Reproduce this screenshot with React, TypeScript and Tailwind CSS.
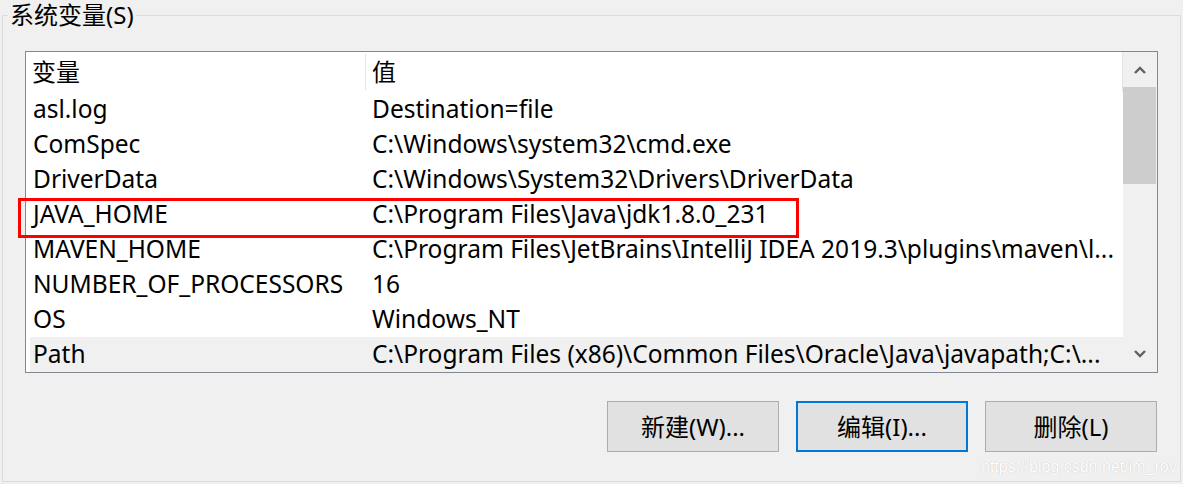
import React from 'react';

const rows = [
  { name: 'asl.log', value: 'Destination=file' },
  { name: 'ComSpec', value: 'C:\\Windows\\system32\\cmd.exe' },
  { name: 'DriverData', value: 'C:\\Windows\\System32\\Drivers\\DriverData' },
  { name: 'JAVA_HOME', value: 'C:\\Program Files\\Java\\jdk1.8.0_231' },
  { name: 'MAVEN_HOME', value: 'C:\\Program Files\\JetBrains\\IntelliJ IDEA 2019.3\\plugins\\maven\\l...' },
  { name: 'NUMBER_OF_PROCESSORS', value: '16' },
  { name: 'OS', value: 'Windows_NT' },
  { name: 'Path', value: 'C:\\Program Files (x86)\\Common Files\\Oracle\\Java\\javapath;C:\\...' },
];

const font = { fontFamily: '"Noto Sans", "Noto Sans CJK SC", sans-serif' };

function Chevron({ up }: { up?: boolean }) {
  return (
    <svg width="12" height="8" viewBox="0 0 12 8">
      <path
        d={up ? 'M1 7 L6 2 L11 7' : 'M1 1 L6 6 L11 1'}
        fill="none"
        stroke="#606060"
        strokeWidth="2.4"
      />
    </svg>
  );
}

export default function App() {
  return (
    <div
      className="relative w-[1183px] h-[484px] bg-[#f0f0f0] overflow-hidden text-black"
      style={font}
    >
      <fieldset className="mx-[2px] h-[482px] border border-[#dcdcdc]">
        <legend className="ml-[5px] px-[2px] text-[24px] leading-[30px]">系统变量(S)</legend>

        <div className="px-[22px]">
          {/* list view */}
          <div className="mt-[21px] w-[1133px] h-[322px] border border-[#828790] bg-white flex">
            <div className="flex-1 flex flex-col min-w-0">
              <div className="h-[40px] flex items-center text-[24px]">
                <div className="w-[339px] pl-[6px] h-full flex items-center">变量</div>
                <div className="w-px h-[36px] bg-[#e5e5e5]" />
                <div className="flex-1 pl-[6px] h-full flex items-center">值</div>
                <div className="w-px h-[40px] bg-[#e5e5e5]" />
              </div>
              {rows.map((r, i) => (
                <div
                  key={r.name}
                  className={`h-[35px] ml-[4px] flex items-center text-[24.5px] whitespace-nowrap ${
                    i === rows.length - 1 ? 'bg-[#f0f0f0]' : ''
                  }`}
                >
                  <div className="w-[335px] pl-[3px] overflow-hidden">{r.name}</div>
                  <div className="flex-1 pl-[7px] overflow-hidden">{r.value}</div>
                </div>
              ))}
            </div>
            {/* scrollbar */}
            <div className="w-[34px] bg-[#f0f0f0] flex flex-col">
              <div className="h-[35px] flex items-center justify-center">
                <Chevron up />
              </div>
              <div className="h-[97px] mr-[1px] bg-[#cdcdcd]" />
              <div className="flex-1" />
              <div className="h-[36px] flex items-center justify-center">
                <Chevron />
              </div>
            </div>
          </div>

          {/* buttons */}
          <div className="mt-[28px] flex justify-end gap-[17px] pr-[1px]">
            {['新建(W)...', '编辑(I)...', '删除(L)'].map((t, i) => (
              <button
                key={t}
                className={`w-[172px] h-[51px] bg-[#e1e1e1] text-[24px] flex items-center justify-center ${
                  i === 1 ? 'border-2 border-[#0078d7]' : 'border border-[#adadad]'
                }`}
              >
                {t}
              </button>
            ))}
          </div>
        </div>
      </fieldset>

      {/* highlight box */}
      <div className="absolute left-[18px] top-[198px] w-[781px] h-[40px] border-[3px] border-[#ff0000]" />

      {/* watermark */}
      <div
        className="absolute left-[981px] top-[455px] text-[16px] text-white"
        style={{ fontFamily: '"Liberation Sans", Arial, sans-serif', textShadow: '0 0 1px #b8b8b8' }}
      >
        https://blog.csdn.net/im_roy
      </div>
    </div>
  );
}
